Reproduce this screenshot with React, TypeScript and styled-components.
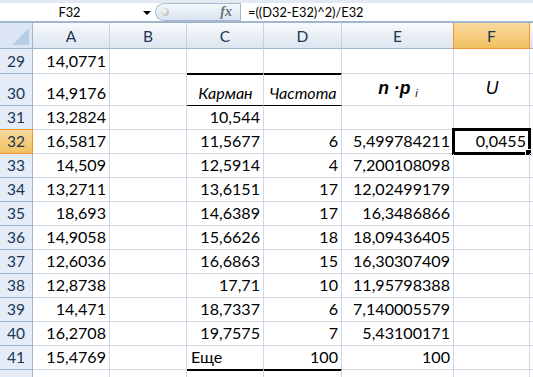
import styled, { createGlobalStyle, css } from 'styled-components';

const GlobalStyle = createGlobalStyle`
  html, body { margin: 0; padding: 0; background: #fff; overflow: hidden; }
  body { font-family: "Lato", "Open Sans", sans-serif; color: #000; }
`;

const Window = styled.div`
  width: 533px;
  height: 377px;
  overflow: hidden;
  display: flex;
  flex-direction: column;
  background: #fff;
`;

const FormulaBar = styled.div`
  display: flex;
  height: 21px;
  border-top: 3px solid #e3e9f1;
  border-bottom: 1px solid #9eb6ce;
  background: #fff;
`;

const NameBox = styled.div`
  position: relative;
  width: 155px;
  display: flex;
  align-items: center;
  justify-content: center;
  font-size: 12.8px;
  color: #000;
  padding-right: 16px;
  box-sizing: border-box;
`;

const DropArrow = styled.span`
  position: absolute;
  right: 4px;
  top: 8px;
  width: 0;
  height: 0;
  border-left: 4px solid transparent;
  border-right: 4px solid transparent;
  border-top: 4px solid #000;
`;

const FxPill = styled.div`
  width: 86px;
  display: flex;
  align-items: center;
  justify-content: space-between;
  padding: 0 8px 0 5px;
  box-sizing: border-box;
  border-radius: 11px 0 0 11px;
  border: 1px solid #a7b9d2;
  border-right: 1px solid #9eb6ce;
  background: linear-gradient(#f3f7fb, #d9e4f2);
`;

const Grip = styled.span`
  width: 8px;
  height: 8px;
  border-radius: 50%;
  background: radial-gradient(circle at 35% 35%, #fff, #a8a8a8);
`;

const Fx = styled.span`
  font-family: "Liberation Serif", serif;
  font-style: italic;
  font-weight: bold;
  font-size: 14px;
  color: #6d7278;
`;

const FormulaText = styled.div`
  flex: 1;
  display: flex;
  align-items: center;
  padding-left: 7px;
  font-size: 12.8px;
  white-space: nowrap;
`;

const Gap = styled.div`
  height: 1px;
  background: #dbe5f1;
  border-bottom: 1px solid #9eb6ce;
`;

const Sheet = styled.div`
  display: grid;
  grid-template-columns: 33px 77px 77px 77px 78px 112px 76px 1fr;
  grid-template-rows: 26px 25px 32px repeat(12, 24px);
`;

const Corner = styled.div`
  position: relative;
  background: #dbe5f3;
  border-right: 1px solid #9eb6ce;
  border-bottom: 1px solid #9eb6ce;
  overflow: hidden;
  &::after {
    content: "";
    position: absolute;
    right: 3px;
    bottom: 3px;
    border-left: 17px solid transparent;
    border-bottom: 17px solid #b8cce4;
  }
`;

const ColHead = styled.div<{ $active?: boolean }>`
  display: flex;
  align-items: center;
  justify-content: center;
  font-size: 15.5px;
  color: #1c3557;
  background: linear-gradient(#f8fafd, #dde5ef);
  border-right: 1px solid #c5d2e1;
  border-bottom: 1px solid #9eb6ce;
  ${(p) =>
    p.$active &&
    css`
      background: linear-gradient(#f9d99f, #f1c15f);
      border-left: 1px solid #f29536;
      border-right: 1px solid #f29536;
      border-bottom: 1px solid #f29536;
      margin-left: -1px;
    `}
`;

const RowHead = styled.div<{ $active?: boolean }>`
  display: flex;
  align-items: flex-end;
  justify-content: center;
  padding-bottom: 3px;
  box-sizing: border-box;
  font-size: 15.5px;
  color: #1c3557;
  background: #e4ecf7;
  border-right: 1px solid #9eb6ce;
  border-bottom: 1px solid #9eb6ce;
  ${(p) =>
    p.$active &&
    css`
      background: linear-gradient(#f9d99f, #f1c15f);
      border-right: 1px solid #f29536;
      border-bottom: 1px solid #f29536;
      box-shadow: 0 -1px 0 #f29536;
    `}
`;

type Edge = 'thin' | 'thick' | undefined;

const Cell = styled.div<{ $align?: 'left' | 'right' | 'center'; $edge?: Edge; $italic?: boolean }>`
  position: relative;
  display: flex;
  align-items: flex-end;
  justify-content: ${(p) => (p.$align === 'left' ? 'flex-start' : p.$align === 'center' ? 'center' : 'flex-end')};
  padding: 0 3px 3px 4px;
  box-sizing: border-box;
  font-size: 16.1px;
  font-style: ${(p) => (p.$italic ? 'italic' : 'normal')};
  white-space: nowrap;
  border-right: 1px solid #d0d7e5;
  border-bottom: 1px solid ${(p) => (p.$edge ? '#000' : '#d0d7e5')};
  ${(p) => p.$edge === 'thick' && css`box-shadow: 0 1px 0 #000;`}
`;

const Formula = styled.span<{ $bold?: boolean }>`
  font-family: "Liberation Sans", Arial, sans-serif;
  font-style: italic;
  font-weight: ${(p) => (p.$bold ? 'bold' : 'normal')};
  font-size: 17.5px;
  padding-bottom: 3px;
`;

const Sub = styled.sub`
  font-size: 11px;
  font-weight: normal;
  vertical-align: -3px;
`;

const Selection = styled.div`
  position: absolute;
  left: -2px;
  top: -2px;
  right: -2px;
  bottom: -2px;
  border: 3px solid #000;
  pointer-events: none;
`;

const Handle = styled.div`
  position: absolute;
  right: -4px;
  bottom: -4px;
  width: 5px;
  height: 5px;
  background: #000;
  border: 1px solid #fff;
`;

const columns = ['A', 'B', 'C', 'D', 'E', 'F', ''];

type Row = { n: number; a: string; c?: string; d?: string; e?: string; f?: string; edge?: Edge };

const rows: Row[] = [
  { n: 29, a: '14,0771', edge: 'thick' },
  { n: 30, a: '14,9176', edge: 'thin' },
  { n: 31, a: '13,2824', c: '10,544' },
  { n: 32, a: '16,5817', c: '11,5677', d: '6', e: '5,499784211', f: '0,0455' },
  { n: 33, a: '14,509', c: '12,5914', d: '4', e: '7,200108098' },
  { n: 34, a: '13,2711', c: '13,6151', d: '17', e: '12,02499179' },
  { n: 35, a: '18,693', c: '14,6389', d: '17', e: '16,3486866' },
  { n: 36, a: '14,9058', c: '15,6626', d: '18', e: '18,09436405' },
  { n: 37, a: '12,6036', c: '16,6863', d: '15', e: '16,30307409' },
  { n: 38, a: '12,8738', c: '17,71', d: '10', e: '11,95798388' },
  { n: 39, a: '14,471', c: '18,7337', d: '6', e: '7,140005579' },
  { n: 40, a: '16,2708', c: '19,7575', d: '7', e: '5,43100171' },
  { n: 41, a: '15,4769', c: 'Еще', d: '100', e: '100', edge: 'thick' },
  { n: 42, a: '' },
];

export default function App() {
  return (
    <Window>
      <GlobalStyle />
      <FormulaBar>
        <NameBox>
          F32
          <DropArrow />
        </NameBox>
        <FxPill>
          <Grip />
          <Fx>fx</Fx>
        </FxPill>
        <FormulaText>=((D32-E32)^2)/E32</FormulaText>
      </FormulaBar>
      <Gap />
      <Sheet>
        <Corner />
        {columns.map((c, i) => (
          <ColHead key={i} $active={c === 'F'}>{c}</ColHead>
        ))}
        {rows.map((r) => (
          <Row key={r.n} r={r} />
        ))}
      </Sheet>
    </Window>
  );
}

function Row({ r }: { r: Row }) {
  if (r.n === 30) {
    return (
      <>
        <RowHead>{r.n}</RowHead>
        <Cell>{r.a}</Cell>
        <Cell />
        <Cell $align="center" $italic $edge="thin">Карман</Cell>
        <Cell $align="center" $italic $edge="thin">Частота</Cell>
        <Cell $align="center">
          <Formula $bold>
            n ·p <Sub>i</Sub>
          </Formula>
        </Cell>
        <Cell $align="center">
          <Formula>U</Formula>
        </Cell>
        <Cell />
      </>
    );
  }
  // the last row only peeks in at the bottom edge, its number is out of view
  const label = r.n > 41 ? '' : r.n;
  return (
    <>
      <RowHead $active={r.n === 32}>{label}</RowHead>
      <Cell>{r.a}</Cell>
      <Cell />
      <Cell $align={r.c === 'Еще' ? 'left' : 'right'} $edge={r.edge}>{r.c}</Cell>
      <Cell $edge={r.edge}>{r.d}</Cell>
      <Cell>{r.e}</Cell>
      <Cell>
        {r.f}
        {r.f && (
          <Selection>
            <Handle />
          </Selection>
        )}
      </Cell>
      <Cell />
    </>
  );
}
